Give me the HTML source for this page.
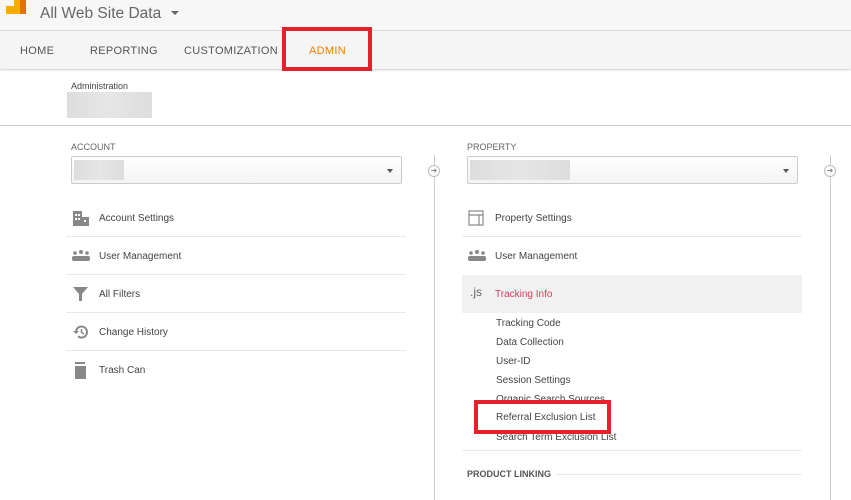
<!DOCTYPE html>
<html><head><style>
*{margin:0;padding:0;box-sizing:border-box}
body{width:851px;height:500px;overflow:hidden;background:#fff;font-family:"Liberation Sans",sans-serif;position:relative;color:#444}
.a{position:absolute}
.top{left:0;top:0;width:851px;height:31px;background:#f7f7f7;border-bottom:1px solid #ddd}
.nav{left:0;top:31px;width:851px;height:38px;background:#f5f5f5;box-shadow:0 1px 2px rgba(0,0,0,.2)}
.nv{top:44px;font-size:11px;color:#555;letter-spacing:.3px}
.row{position:absolute;height:38px;border-bottom:1px solid #e8e8e8;font-size:10px;color:#444}
.row span{position:absolute;left:33px;top:14px}
.ic{position:absolute;left:6px;top:11px}
.sub{position:absolute;left:496px;font-size:10px;color:#444}
.blur{background:linear-gradient(90deg,#ddd,#e6e6e6,#ddd)}
.dd{height:28px;border:1px solid #ccc;border-radius:2px;background:linear-gradient(#fff,#f3f3f3)}
.car{position:absolute;right:8px;top:12px;border-left:3px solid transparent;border-right:3px solid transparent;border-top:4px solid #555}
.vl{width:1px;background:#ccc}
.circ{width:12px;height:12px;border:1px solid #bbb;border-radius:50%;background:#fff;font-size:8px;line-height:10px;text-align:center;color:#888}
</style></head><body>
<div class="a top"></div>
<svg class="a" style="left:6px;top:0" width="22" height="16"><rect x="0" y="6" width="8" height="8" fill="#f9ab00"/><rect x="8" y="0" width="6" height="14" fill="#f9ab00"/><rect x="14" y="0" width="6" height="14" fill="#e37400"/></svg>
<div class="a" style="left:40px;top:5px;font-size:15.5px;color:#666">All Web Site Data</div>
<div class="a" style="left:171px;top:11px;border-left:4px solid transparent;border-right:4px solid transparent;border-top:4px solid #666"></div>
<div class="a nav"></div>
<div class="a nv" style="left:20px;top:45px">HOME</div>
<div class="a nv" style="left:90px;top:45px">REPORTING</div>
<div class="a nv" style="left:184px;top:45px">CUSTOMIZATION</div>
<div class="a nv" style="left:309px;top:45px;color:#f57c00">ADMIN</div>
<div class="a" style="left:282px;top:27px;width:90px;height:44px;border:4px solid #e8202a"></div>
<div class="a" style="left:71px;top:81px;font-size:9px;color:#444">Administration</div>
<div class="a blur" style="left:67px;top:92px;width:85px;height:26px"></div>
<div class="a" style="left:0;top:125px;width:851px;height:1px;background:#ccc"></div>

<div class="a" style="left:71px;top:142px;font-size:9px;color:#666">ACCOUNT</div>
<div class="a dd" style="left:71px;top:156px;width:331px"><div class="a blur" style="left:2px;top:3px;width:50px;height:20px"></div><div class="car"></div></div>
<div class="a" style="left:467px;top:142px;font-size:9px;color:#666">PROPERTY</div>
<div class="a dd" style="left:467px;top:156px;width:331px"><div class="a blur" style="left:2px;top:3px;width:100px;height:20px"></div><div class="car"></div></div>
<div class="a vl" style="left:434px;top:155px;height:345px"></div>
<div class="a vl" style="left:830px;top:155px;height:345px"></div>
<div class="a circ" style="left:428px;top:165px">➜</div>
<div class="a circ" style="left:824px;top:165px">➜</div>

<div class="row" style="left:66px;top:199px;width:340px"><svg class="ic" width="18" height="16"><rect x="1" y="1" width="9" height="15" fill="#888"/><rect x="10" y="7" width="7" height="9" fill="#888"/><g fill="#fff"><rect x="3" y="4" width="2" height="2"/><rect x="6" y="4" width="2" height="2"/><rect x="3" y="8" width="2" height="2"/><rect x="6" y="8" width="2" height="2"/><rect x="12" y="10" width="2" height="2"/></g></svg><span>Account Settings</span></div>
<div class="row" style="left:66px;top:237px;width:340px"><svg class="ic" width="18" height="16"><g fill="#888"><circle cx="3" cy="5" r="1.8"/><circle cx="9" cy="4" r="2"/><circle cx="15" cy="5" r="1.8"/><rect x="0" y="8" width="18" height="5" rx="2"/></g></svg><span>User Management</span></div>
<div class="row" style="left:66px;top:275px;width:340px"><svg class="ic" width="18" height="16"><path d="M1 1H16L10 8V15H7V8Z" fill="#888"/></svg><span>All Filters</span></div>
<div class="row" style="left:66px;top:313px;width:340px"><svg class="ic" width="18" height="16"><path d="M4 8A5.5 5.5 0 1 1 6 12.3" fill="none" stroke="#888" stroke-width="2"/><path d="M1 7L4 10L7 7Z" fill="#888"/><path d="M9.5 5V8.5L12 10" fill="none" stroke="#888" stroke-width="1.5"/></svg><span>Change History</span></div>
<div class="row" style="left:66px;top:351px;width:340px;border:none"><svg class="ic" width="18" height="18"><rect x="3" y="0" width="10" height="2" fill="#888"/><rect x="3" y="4" width="11" height="13" fill="#888"/></svg><span>Trash Can</span></div>

<div class="row" style="left:462px;top:199px;width:340px"><svg class="ic" width="18" height="16"><rect x="1" y="1" width="14" height="14" fill="none" stroke="#888" stroke-width="1.2"/><path d="M1 5H15M11 5V15" stroke="#888" stroke-width="1.2"/></svg><span>Property Settings</span></div>
<div class="row" style="left:462px;top:237px;width:340px;border:none"><svg class="ic" width="18" height="16"><g fill="#888"><circle cx="3" cy="5" r="1.8"/><circle cx="9" cy="4" r="2"/><circle cx="15" cy="5" r="1.8"/><rect x="0" y="8" width="18" height="5" rx="2"/></g></svg><span>User Management</span></div>
<div class="row" style="left:462px;top:275px;width:340px;background:#f1f1f1;border:none"><span style="left:8px;top:10px;font-size:12px;color:#666">.js</span><span style="color:#d2405a">Tracking Info</span></div>
<div class="sub" style="top:318px">Tracking Code</div>
<div class="sub" style="top:337px">Data Collection</div>
<div class="sub" style="top:356px">User-ID</div>
<div class="sub" style="top:375px">Session Settings</div>
<div class="sub" style="top:394px">Organic Search Sources</div>
<div class="sub" style="top:432px">Search Term Exclusion List</div>
<div class="a" style="left:474px;top:400px;width:137px;height:34px;border:4px solid #e8202a;background:#fff"></div>
<div class="sub" style="top:412px">Referral Exclusion List</div>
<div class="a" style="left:462px;top:450px;width:340px;height:1px;background:#e8e8e8"></div>
<div class="a" style="left:467px;top:469px;font-size:9px;font-weight:bold;color:#555">PRODUCT LINKING</div>
<div class="a" style="left:556px;top:474px;width:246px;height:1px;background:#e8e8e8"></div>
</body></html>
